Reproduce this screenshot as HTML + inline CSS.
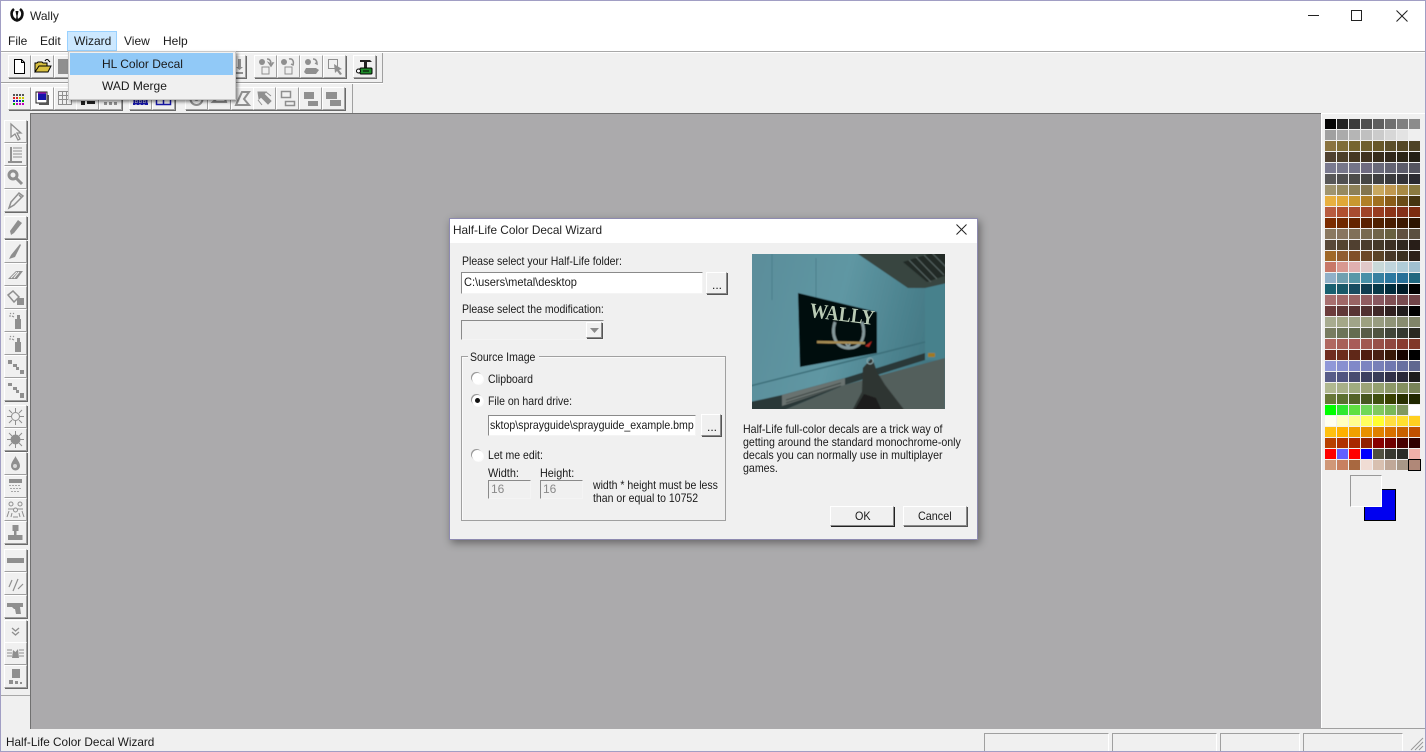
<!DOCTYPE html>
<html><head><meta charset="utf-8"><title>Wally</title>
<style>
html,body{margin:0;padding:0;width:1426px;height:752px;overflow:hidden;background:#f0f0f0}
body{position:relative;font:12px/14px "Liberation Sans",sans-serif;color:#1a1a1a}
div,span,svg{position:absolute;box-sizing:border-box}
.t{white-space:nowrap}
.n{transform:scaleX(.875);transform-origin:0 50%}
.b{width:23px;height:23px;background:#f0f0f0;border-top:1px solid #fff;border-left:1px solid #fff;border-right:1px solid #a0a0a0;border-bottom:1px solid #a0a0a0;box-shadow:1px 1px 0 #6a6a6a}
.b svg{left:0;top:0;width:21px;height:21px}
.in{background:#fff;border-top:1px solid #8a8a8a;border-left:1px solid #8a8a8a;border-right:1px solid #f4f4f4;border-bottom:1px solid #f4f4f4;overflow:hidden}
.dis{background:#f0f0f0;color:#8a8a8a}
.pb{background:#f0f0f0;border-top:1px solid #fff;border-left:1px solid #fff;border-right:1px solid #8a8a8a;border-bottom:1px solid #8a8a8a;box-shadow:1px 1px 0 #555}
.r{width:11px;height:11px;border-radius:50%;background:#fff;box-shadow:-1px -1px 0 #999,1px 1px 0 #fafafa}
.st{top:733px;height:19px;border-top:1px solid #a0a0a0;border-left:1px solid #a0a0a0;border-right:1px solid #fff}
</style></head><body>

<div style="left:0;top:0;width:1426px;height:51px;background:#fff"></div>
<div style="left:0;top:51px;width:1426px;height:1px;background:#a8a8a8"></div>
<div style="left:0;top:52px;width:1426px;height:1px;background:#fff"></div>

<svg style="left:9px;top:7px;width:16px;height:16px" viewBox="0 0 16 16"><path d="M5 2C1 5 2 12 8 13.500C14 12 15 5 11 2" fill="none" stroke="#111" stroke-width="2.600"/><path d="M6.500 4L9.500 4 8.600 9 9 13H7L7.400 9z" fill="#111"/></svg>
<div class="t" style="left:30px;top:9px;color:#222">Wally</div>

<svg style="left:1300px;top:0;width:126px;height:30px" viewBox="0 0 126 30">
<path d="M8 15.500h11" stroke="#222" fill="none"/>
<rect x="51.500" y="10.500" width="10" height="10" fill="none" stroke="#222"/>
<path d="M96.500 10.500l11 11M107.500 10.500l-11 11" stroke="#222" fill="none"/>
</svg>

<div class="t" style="left:8px;top:34px">File</div>
<div class="t" style="left:40px;top:34px">Edit</div>
<div style="left:67px;top:31px;width:50px;height:20px;background:#cce8ff;border:1px solid #99d1ff"></div>
<div class="t" style="left:74px;top:34px">Wizard</div>
<div class="t" style="left:124px;top:34px">View</div>
<div class="t" style="left:163px;top:34px">Help</div>

<!-- toolbar separators -->
<div style="left:0;top:82px;width:383px;height:1px;background:#a0a0a0"></div>
<div style="left:0;top:83px;width:383px;height:1px;background:#fff"></div>
<div style="left:382px;top:53px;width:1px;height:29px;background:#a0a0a0"></div>
<div style="left:352px;top:84px;width:1px;height:29px;background:#a0a0a0"></div>

<!-- Row 1 -->
<div class="b" style="left:8px;top:55px"><svg viewBox="0 0 21 21"><path d="M5.500 3.500h7l3 3v11h-10z M12.500 3.500v3h3" fill="#fff" stroke="#000"/></svg></div>
<div class="b" style="left:31px;top:55px"><svg viewBox="0 0 21 21"><path d="M3 16V7h2l1-1h4l1 1h4v3H7L3 16h13l3-6H7" fill="#d8c040" stroke="#000"/><path d="M13 5c1-2 3-2 4 0l1 1" stroke="#000" fill="none"/></svg></div>
<div class="b" style="left:54px;top:55px"><svg viewBox="0 0 21 21"><path d="M3 3h15v15H3z" fill="#8f8f8f"/></svg></div>
<div class="b" style="left:223px;top:55px"><svg viewBox="0 0 21 21"><path d="M14 3h3v8h2l-3.500 3-3.500-3h2zM7 16h12v2H7z" fill="#8f8f8f"/></svg></div>
<div class="b" style="left:254px;top:55px"><svg viewBox="0 0 21 21"><circle cx="7" cy="6" r="3" fill="#8f8f8f"/><path d="M7 11h7v7H7z" fill="#f0f0f0" stroke="#8f8f8f"/><path d="M12 3c3 0 4 2 4 5l-2-1 2 3 2-3-1 0" fill="none" stroke="#8f8f8f" stroke-width="1.500"/></svg></div>
<div class="b" style="left:277px;top:55px"><svg viewBox="0 0 21 21"><circle cx="6" cy="6" r="3" fill="#8f8f8f"/><path d="M7 11h7v7H7z" fill="#f0f0f0" stroke="#8f8f8f"/><path d="M11 3c4-1 5 3 4 6l-2-1" fill="none" stroke="#8f8f8f" stroke-width="1.500"/></svg></div>
<div class="b" style="left:300px;top:55px"><svg viewBox="0 0 21 21"><circle cx="7" cy="6" r="3" fill="#8f8f8f"/><path d="M3 16l2-4h10l3 2-3 4H5z" fill="#8f8f8f"/><path d="M12 3c3 0 4 2 4 5l-2-1" fill="none" stroke="#8f8f8f" stroke-width="1.500"/></svg></div>
<div class="b" style="left:323px;top:55px"><svg viewBox="0 0 21 21"><path d="M4.500 3.500h9v9h-9z" fill="none" stroke="#8f8f8f"/><path d="M10 8l8 5-3 1 3 4-2 1-3-4-2 2z" fill="#8f8f8f"/></svg></div>
<div class="b" style="left:353px;top:55px"><svg viewBox="0 0 21 21"><path d="M6 4h10l2 2h-5v6h-3V6H6z" fill="#222"/><rect x="6" y="12" width="12" height="6" rx="1" fill="#1f8a2a" stroke="#000"/><circle cx="4.500" cy="15" r="2" fill="#fff" stroke="#000"/><path d="M9 15h6" stroke="#000"/></svg></div>

<!-- Row 2 -->
<div class="b" style="left:8px;top:87px"><svg viewBox="0 0 21 21"><g fill="#555"><path d="M4 6h2v2H4zM7 6h2v2H7zM10 6h2v2h-2zM13 6h2v2h-2z"/></g><g fill="#d22"><path d="M4 9h2v2H4zM7 9h2v2H7z"/></g><g fill="#cc0"><path d="M10 9h2v2h-2zM13 9h2v2h-2z"/></g><g fill="#1a1ac8"><path d="M4 12h2v2H4zM7 12h2v2H7zM10 12h2v2h-2z"/></g><g fill="#0a0"><path d="M13 12h2v2h-2zM4 15h2v2H4z"/></g><g fill="#b0b"><path d="M7 15h2v2H7zM10 15h2v2h-2zM13 15h2v2h-2z"/></g></svg></div>
<div class="b" style="left:31px;top:87px;background:#fafafa"><svg viewBox="0 0 21 21"><path d="M4 4h11v11H4z" fill="#fff" stroke="#222"/><path d="M6 5h8v7H6z" fill="#1515a8"/><path d="M6 5h8" stroke="#d018c0"/><path d="M7 15h10v2H7zM15 7h2v9h-2z" fill="#555"/></svg></div>
<div class="b" style="left:54px;top:87px"><svg viewBox="0 0 21 21"><path d="M3.500 3.500h13v13h-13zM3.500 7.500h13M3.500 11.500h13M7.500 3.500v13M11.500 3.500v13" stroke="#8f8f8f" fill="none"/></svg></div>
<div class="b" style="left:76px;top:87px"><svg viewBox="0 0 21 21"><path d="M4 13h4v4H4zM10 13h8v3H10z" fill="#222"/></svg></div>
<div class="b" style="left:99px;top:87px"><svg viewBox="0 0 21 21"><path d="M4 14h3v3H4zM9 14h3v3H9zM14 14h3v3h-3z" fill="#8f8f8f"/></svg></div>
<div class="b" style="left:129px;top:87px"><svg viewBox="0 0 21 21"><path d="M3 8h15v9H3z" fill="#1515a8"/><path d="M3 10h15M3 12h15M3 14h15M6 8v9M10 8v9M14 8v9" stroke="#ddd" stroke-dasharray="1 1"/></svg></div>
<div class="b" style="left:152px;top:87px"><svg viewBox="0 0 21 21"><path d="M3.500 6.500h14v10h-14zM10.500 6.500v10" stroke="#1515a8" stroke-width="1.500" fill="none"/></svg></div>
<div class="b" style="left:185px;top:87px"><svg viewBox="0 0 21 21"><circle cx="10.500" cy="11" r="6" fill="none" stroke="#8f8f8f" stroke-width="2"/><circle cx="10.500" cy="11" r="2" fill="#8f8f8f"/></svg></div>
<div class="b" style="left:208px;top:87px"><svg viewBox="0 0 21 21"><path d="M4 14L14 5l3 9z" fill="none" stroke="#8f8f8f" stroke-width="2"/></svg></div>
<div class="b" style="left:231px;top:87px"><svg viewBox="0 0 21 21"><path d="M4 17L10 4h7l-5 7 5 6z" fill="none" stroke="#8f8f8f" stroke-width="2"/></svg></div>
<div class="b" style="left:253px;top:87px"><svg viewBox="0 0 21 21"><path d="M4 4h8l-2 2 7 7-3 3-7-7-2 2zM4 12l4 5M12 4l5 4" fill="#8f8f8f" stroke="#8f8f8f"/></svg></div>
<div class="b" style="left:276px;top:87px"><svg viewBox="0 0 21 21"><path d="M4.500 3.500h9v6h-9zM8.500 13.500h9v4h-9z" fill="none" stroke="#8f8f8f" stroke-width="1.500"/></svg></div>
<div class="b" style="left:299px;top:87px"><svg viewBox="0 0 21 21"><path d="M4 4h10v7H4zM8 13h10v5H8z" fill="#8f8f8f"/></svg></div>
<div class="b" style="left:322px;top:87px"><svg viewBox="0 0 21 21"><path d="M3 4h11v7H3zM7 12h11v6H7z" fill="#8f8f8f"/></svg></div>

<!-- Left toolbar -->
<div style="left:0;top:695px;width:31px;height:1px;background:#a8a8a8"></div>
<div class="b" style="left:4px;top:120px"><svg viewBox="0 0 21 21"><path d="M6 3l10 9h-4l3 6-2 1-3-6-4 3z" fill="#f0f0f0" stroke="#8f8f8f" stroke-width="1.300"/></svg></div>
<div class="b" style="left:4px;top:143px"><svg viewBox="0 0 21 21"><path d="M6 3v14M3 18h14" stroke="#8f8f8f" stroke-width="2"/><path d="M8 4h9M8 7h9M8 10h9M8 13h9" stroke="#8f8f8f"/></svg></div>
<div class="b" style="left:4px;top:166px"><svg viewBox="0 0 21 21"><circle cx="8" cy="8" r="4" fill="none" stroke="#8f8f8f" stroke-width="3"/><path d="M11 11l6 6" stroke="#8f8f8f" stroke-width="3"/></svg></div>
<div class="b" style="left:4px;top:189px"><svg viewBox="0 0 21 21"><path d="M4 18l2-6 8-9 4 3-9 9zM14 5l3 3" fill="#f0f0f0" stroke="#8f8f8f" stroke-width="1.500"/></svg></div>
<div class="b" style="left:4px;top:216px"><svg viewBox="0 0 21 21"><path d="M6 18l-1-4 8-11 4 3-8 10z" fill="#8f8f8f"/></svg></div>
<div class="b" style="left:4px;top:240px"><svg viewBox="0 0 21 21"><path d="M4 18l2-4 9-11 1 1-6 12z" fill="#8f8f8f"/></svg></div>
<div class="b" style="left:4px;top:263px"><svg viewBox="0 0 21 21"><path d="M3 15l8-8h7l-6 8z" fill="#8f8f8f"/><path d="M6 14l6-6M9 14l5-6" stroke="#f0f0f0"/></svg></div>
<div class="b" style="left:4px;top:286px"><svg viewBox="0 0 21 21"><path d="M3 8l5-4 6 6-5 5z" fill="#f0f0f0" stroke="#8f8f8f" stroke-width="1.500"/><path d="M12 11h7v7h-7z" fill="#8f8f8f"/></svg></div>
<div class="b" style="left:4px;top:309px"><svg viewBox="0 0 21 21"><path d="M10 9h6v10h-6z" fill="#8f8f8f"/><path d="M12 5h3v4h-3z" fill="#8f8f8f"/><path d="M5 3l1 1M8 3l1 1M4 6l2 0M7 6l2 1" stroke="#8f8f8f"/></svg></div>
<div class="b" style="left:4px;top:332px"><svg viewBox="0 0 21 21"><path d="M10 9h6v10h-6z" fill="#8f8f8f"/><path d="M12 5h3v4h-3z" fill="#8f8f8f"/><path d="M5 3l1 1M8 3l1 1M4 6l2 0M7 6l2 1" stroke="#8f8f8f"/></svg></div>
<div class="b" style="left:4px;top:355px"><svg viewBox="0 0 21 21"><path d="M3 4h4v4H3zM8 8h4v3H8zM11 11h3v3h-3zM15 14h4v4h-4z" fill="#8f8f8f"/></svg></div>
<div class="b" style="left:4px;top:378px"><svg viewBox="0 0 21 21"><path d="M3 4h4v3H3zM8 8h4v3H8zM11 11h3v3h-3zM15 14h4v5h-4z" fill="#8f8f8f"/></svg></div>
<div class="b" style="left:4px;top:405px"><svg viewBox="0 0 21 21"><circle cx="10.500" cy="10.500" r="4" fill="none" stroke="#8f8f8f"/><path d="M10.500 2v4M10.500 15v4M2 10.500h4M15 10.500h4M4 4l3 3M14 14l3 3M17 4l-3 3M7 14l-3 3" stroke="#8f8f8f"/></svg></div>
<div class="b" style="left:4px;top:428px"><svg viewBox="0 0 21 21"><circle cx="10.500" cy="10.500" r="5" fill="#8f8f8f"/><path d="M10.500 2v4M10.500 15v4M2 10.500h4M15 10.500h4M4 4l3 3M14 14l3 3M17 4l-3 3M7 14l-3 3" stroke="#8f8f8f"/></svg></div>
<div class="b" style="left:4px;top:452px"><svg viewBox="0 0 21 21"><path d="M10.500 3c1 3 4.500 6 4.500 10a4.500 4.500 0 0 1-9 0c0-4 3.500-7 4.500-10z" fill="#8f8f8f"/><circle cx="10" cy="13" r="2" fill="#d8d8d8"/></svg></div>
<div class="b" style="left:4px;top:475px"><svg viewBox="0 0 21 21"><path d="M4 3h13v4H4z" fill="#8f8f8f"/><path d="M5 9v1M8 9v1M11 9v1M14 9v1M6 12v1M9 12v1M12 12v1M15 12v1M7 15v1M10 15v1M13 15v1" stroke="#8f8f8f" stroke-width="1.500"/></svg></div>
<div class="b" style="left:4px;top:498px"><svg viewBox="0 0 21 21"><g fill="none" stroke="#8f8f8f"><circle cx="6" cy="5" r="2"/><circle cx="15" cy="5" r="2"/><circle cx="10.500" cy="11" r="2"/><path d="M3 10h6M12 10h6M2 18l2-6M8 18h5M19 18l-2-6M6 18l1-4M14 14l1 4"/></g></svg></div>
<div class="b" style="left:4px;top:521px"><svg viewBox="0 0 21 21"><path d="M7.500 3h6v6h-2v4h6v5H3v-5h6V9H7.500z" fill="#8f8f8f"/></svg></div>
<div class="b" style="left:4px;top:549px"><svg viewBox="0 0 21 21"><path d="M2 8h17v5H2z" fill="#8f8f8f"/></svg></div>
<div class="b" style="left:4px;top:572px"><svg viewBox="0 0 21 21"><path d="M4 14l3-7M8 18l5-12M13 16l5-5" stroke="#8f8f8f" stroke-width="1.200"/></svg></div>
<div class="b" style="left:4px;top:595px"><svg viewBox="0 0 21 21"><path d="M2 7h16v4h-3l1 7h-5l-1-5H9L7 11H2z" fill="#8f8f8f"/></svg></div>
<div class="b" style="left:4px;top:620px"><svg viewBox="0 0 21 21"><path d="M7 7l3.500 3L14 7M7 11l3.500 3 3.500-3" stroke="#8f8f8f" fill="none" stroke-width="1.300"/></svg></div>
<div class="b" style="left:4px;top:642px"><svg viewBox="0 0 21 21"><path d="M2 7h5M2 10h5M2 13h5M14 7h5M14 10h5M14 13h5" stroke="#8f8f8f"/><path d="M7 15l1-8 2.500 2L13 6l1 9z" fill="#8f8f8f"/></svg></div>
<div class="b" style="left:4px;top:665px"><svg viewBox="0 0 21 21"><path d="M7 3h8v9H7zM4 14h4v4H4zM10 15h3v3h-3zM15 16h2v2h-2z" fill="#8f8f8f"/></svg></div>

<!-- workspace -->
<div style="left:30px;top:113px;width:1291px;height:616px;background:#abaaac;border-top:1px solid #707070;border-left:1px solid #707070"></div>
<div style="left:1321px;top:113px;width:105px;height:616px;background:#f0f0f0;border-top:1px solid #fff;border-left:1px solid #fff"></div>
<div style="left:1321px;top:728px;width:105px;height:1px;background:#a0a0a0"></div>

<!-- palette -->
<svg style="left:1325px;top:119px;width:96px;height:352px" viewBox="0 0 96 352" shape-rendering="crispEdges">
<rect x="0" y="0" width="11" height="10" fill="#050505"/><rect x="12" y="0" width="11" height="10" fill="#232323"/><rect x="24" y="0" width="11" height="10" fill="#3b3b3b"/><rect x="36" y="0" width="11" height="10" fill="#4f4f4f"/><rect x="48" y="0" width="11" height="10" fill="#5f5f5f"/><rect x="60" y="0" width="11" height="10" fill="#6f6f6f"/><rect x="72" y="0" width="11" height="10" fill="#7f7f7f"/><rect x="84" y="0" width="11" height="10" fill="#8b8b8b"/>
<rect x="0" y="11" width="11" height="10" fill="#a0a0a0"/><rect x="12" y="11" width="11" height="10" fill="#ababab"/><rect x="24" y="11" width="11" height="10" fill="#b5b5b5"/><rect x="36" y="11" width="11" height="10" fill="#c0c0c0"/><rect x="48" y="11" width="11" height="10" fill="#cbcbcb"/><rect x="60" y="11" width="11" height="10" fill="#d7d7d7"/><rect x="72" y="11" width="11" height="10" fill="#e3e3e3"/><rect x="84" y="11" width="11" height="10" fill="#efefef"/>
<rect x="0" y="22" width="11" height="10" fill="#8a7340"/><rect x="12" y="22" width="11" height="10" fill="#7f6d38"/><rect x="24" y="22" width="11" height="10" fill="#76652f"/><rect x="36" y="22" width="11" height="10" fill="#6f5f2f"/><rect x="48" y="22" width="11" height="10" fill="#685829"/><rect x="60" y="22" width="11" height="10" fill="#5c4f2a"/><rect x="72" y="22" width="11" height="10" fill="#554826"/><rect x="84" y="22" width="11" height="10" fill="#4e4326"/>
<rect x="0" y="33" width="11" height="10" fill="#4f4130"/><rect x="12" y="33" width="11" height="10" fill="#4c3f2a"/><rect x="24" y="33" width="11" height="10" fill="#463822"/><rect x="36" y="33" width="11" height="10" fill="#403220"/><rect x="48" y="33" width="11" height="10" fill="#372c1c"/><rect x="60" y="33" width="11" height="10" fill="#30271a"/><rect x="72" y="33" width="11" height="10" fill="#2a2416"/><rect x="84" y="33" width="11" height="10" fill="#231f15"/>
<rect x="0" y="44" width="11" height="10" fill="#7a7a90"/><rect x="12" y="44" width="11" height="10" fill="#77778a"/><rect x="24" y="44" width="11" height="10" fill="#747488"/><rect x="36" y="44" width="11" height="10" fill="#6f6b80"/><rect x="48" y="44" width="11" height="10" fill="#6a6a7a"/><rect x="60" y="44" width="11" height="10" fill="#636372"/><rect x="72" y="44" width="11" height="10" fill="#5c5c6a"/><rect x="84" y="44" width="11" height="10" fill="#555560"/>
<rect x="0" y="55" width="11" height="10" fill="#585858"/><rect x="12" y="55" width="11" height="10" fill="#505050"/><rect x="24" y="55" width="11" height="10" fill="#4c4c4a"/><rect x="36" y="55" width="11" height="10" fill="#464644"/><rect x="48" y="55" width="11" height="10" fill="#404040"/><rect x="60" y="55" width="11" height="10" fill="#3a3a3c"/><rect x="72" y="55" width="11" height="10" fill="#333338"/><rect x="84" y="55" width="11" height="10" fill="#2a2a30"/>
<rect x="0" y="66" width="11" height="10" fill="#a09570"/><rect x="12" y="66" width="11" height="10" fill="#968a60"/><rect x="24" y="66" width="11" height="10" fill="#8c8058"/><rect x="36" y="66" width="11" height="10" fill="#837550"/><rect x="48" y="66" width="11" height="10" fill="#c8a860"/><rect x="60" y="66" width="11" height="10" fill="#c09850"/><rect x="72" y="66" width="11" height="10" fill="#a88a45"/><rect x="84" y="66" width="11" height="10" fill="#8a7a40"/>
<rect x="0" y="77" width="11" height="10" fill="#e8b040"/><rect x="12" y="77" width="11" height="10" fill="#e0a838"/><rect x="24" y="77" width="11" height="10" fill="#c89830"/><rect x="36" y="77" width="11" height="10" fill="#b08028"/><rect x="48" y="77" width="11" height="10" fill="#a07020"/><rect x="60" y="77" width="11" height="10" fill="#8a5c18"/><rect x="72" y="77" width="11" height="10" fill="#6a4c18"/><rect x="84" y="77" width="11" height="10" fill="#453510"/>
<rect x="0" y="88" width="11" height="10" fill="#b85c40"/><rect x="12" y="88" width="11" height="10" fill="#b05030"/><rect x="24" y="88" width="11" height="10" fill="#a84c30"/><rect x="36" y="88" width="11" height="10" fill="#a04428"/><rect x="48" y="88" width="11" height="10" fill="#983c20"/><rect x="60" y="88" width="11" height="10" fill="#8c3418"/><rect x="72" y="88" width="11" height="10" fill="#84301a"/><rect x="84" y="88" width="11" height="10" fill="#7c2c10"/>
<rect x="0" y="99" width="11" height="10" fill="#7c2c00"/><rect x="12" y="99" width="11" height="10" fill="#702800"/><rect x="24" y="99" width="11" height="10" fill="#642400"/><rect x="36" y="99" width="11" height="10" fill="#5a2000"/><rect x="48" y="99" width="11" height="10" fill="#502000"/><rect x="60" y="99" width="11" height="10" fill="#481c00"/><rect x="72" y="99" width="11" height="10" fill="#3c1800"/><rect x="84" y="99" width="11" height="10" fill="#2c1400"/>
<rect x="0" y="110" width="11" height="10" fill="#8a7860"/><rect x="12" y="110" width="11" height="10" fill="#887560"/><rect x="24" y="110" width="11" height="10" fill="#807058"/><rect x="36" y="110" width="11" height="10" fill="#786a50"/><rect x="48" y="110" width="11" height="10" fill="#706448"/><rect x="60" y="110" width="11" height="10" fill="#686040"/><rect x="72" y="110" width="11" height="10" fill="#605040"/><rect x="84" y="110" width="11" height="10" fill="#5a5040"/>
<rect x="0" y="121" width="11" height="10" fill="#584838"/><rect x="12" y="121" width="11" height="10" fill="#544430"/><rect x="24" y="121" width="11" height="10" fill="#504030"/><rect x="36" y="121" width="11" height="10" fill="#4a3c2c"/><rect x="48" y="121" width="11" height="10" fill="#443828"/><rect x="60" y="121" width="11" height="10" fill="#3c3024"/><rect x="72" y="121" width="11" height="10" fill="#302820"/><rect x="84" y="121" width="11" height="10" fill="#281e18"/>
<rect x="0" y="132" width="11" height="10" fill="#a06828"/><rect x="12" y="132" width="11" height="10" fill="#905c30"/><rect x="24" y="132" width="11" height="10" fill="#805028"/><rect x="36" y="132" width="11" height="10" fill="#6c4828"/><rect x="48" y="132" width="11" height="10" fill="#5c4428"/><rect x="60" y="132" width="11" height="10" fill="#483828"/><rect x="72" y="132" width="11" height="10" fill="#3c3020"/><rect x="84" y="132" width="11" height="10" fill="#2c2018"/>
<rect x="0" y="143" width="11" height="10" fill="#c87868"/><rect x="12" y="143" width="11" height="10" fill="#d89890"/><rect x="24" y="143" width="11" height="10" fill="#e0b0b0"/><rect x="36" y="143" width="11" height="10" fill="#e0c8c8"/><rect x="48" y="143" width="11" height="10" fill="#c8d8d8"/><rect x="60" y="143" width="11" height="10" fill="#c0d4dc"/><rect x="72" y="143" width="11" height="10" fill="#b0ccd8"/><rect x="84" y="143" width="11" height="10" fill="#a0c0d0"/>
<rect x="0" y="154" width="11" height="10" fill="#90b0c8"/><rect x="12" y="154" width="11" height="10" fill="#70a0b0"/><rect x="24" y="154" width="11" height="10" fill="#5898a8"/><rect x="36" y="154" width="11" height="10" fill="#4890a8"/><rect x="48" y="154" width="11" height="10" fill="#3880a0"/><rect x="60" y="154" width="11" height="10" fill="#2c78a0"/><rect x="72" y="154" width="11" height="10" fill="#287098"/><rect x="84" y="154" width="11" height="10" fill="#206880"/>
<rect x="0" y="165" width="11" height="10" fill="#186070"/><rect x="12" y="165" width="11" height="10" fill="#185868"/><rect x="24" y="165" width="11" height="10" fill="#184c60"/><rect x="36" y="165" width="11" height="10" fill="#103c50"/><rect x="48" y="165" width="11" height="10" fill="#083848"/><rect x="60" y="165" width="11" height="10" fill="#002c3c"/><rect x="72" y="165" width="11" height="10" fill="#001c28"/><rect x="84" y="165" width="11" height="10" fill="#000000"/>
<rect x="0" y="176" width="11" height="10" fill="#a87070"/><rect x="12" y="176" width="11" height="10" fill="#a06868"/><rect x="24" y="176" width="11" height="10" fill="#986464"/><rect x="36" y="176" width="11" height="10" fill="#905c60"/><rect x="48" y="176" width="11" height="10" fill="#885860"/><rect x="60" y="176" width="11" height="10" fill="#805054"/><rect x="72" y="176" width="11" height="10" fill="#784c50"/><rect x="84" y="176" width="11" height="10" fill="#704448"/>
<rect x="0" y="187" width="11" height="10" fill="#6c3c3c"/><rect x="12" y="187" width="11" height="10" fill="#603838"/><rect x="24" y="187" width="11" height="10" fill="#583434"/><rect x="36" y="187" width="11" height="10" fill="#503030"/><rect x="48" y="187" width="11" height="10" fill="#402828"/><rect x="60" y="187" width="11" height="10" fill="#302020"/><rect x="72" y="187" width="11" height="10" fill="#201c1c"/><rect x="84" y="187" width="11" height="10" fill="#000000"/>
<rect x="0" y="198" width="11" height="10" fill="#a8ac90"/><rect x="12" y="198" width="11" height="10" fill="#a4a888"/><rect x="24" y="198" width="11" height="10" fill="#a0a488"/><rect x="36" y="198" width="11" height="10" fill="#9ca080"/><rect x="48" y="198" width="11" height="10" fill="#989c80"/><rect x="60" y="198" width="11" height="10" fill="#909478"/><rect x="72" y="198" width="11" height="10" fill="#888c70"/><rect x="84" y="198" width="11" height="10" fill="#808468"/>
<rect x="0" y="209" width="11" height="10" fill="#787c60"/><rect x="12" y="209" width="11" height="10" fill="#6c7458"/><rect x="24" y="209" width="11" height="10" fill="#646c50"/><rect x="36" y="209" width="11" height="10" fill="#585c48"/><rect x="48" y="209" width="11" height="10" fill="#505440"/><rect x="60" y="209" width="11" height="10" fill="#404438"/><rect x="72" y="209" width="11" height="10" fill="#343830"/><rect x="84" y="209" width="11" height="10" fill="#282820"/>
<rect x="0" y="220" width="11" height="10" fill="#b06860"/><rect x="12" y="220" width="11" height="10" fill="#a86058"/><rect x="24" y="220" width="11" height="10" fill="#a85c58"/><rect x="36" y="220" width="11" height="10" fill="#a05850"/><rect x="48" y="220" width="11" height="10" fill="#985048"/><rect x="60" y="220" width="11" height="10" fill="#904840"/><rect x="72" y="220" width="11" height="10" fill="#883c30"/><rect x="84" y="220" width="11" height="10" fill="#803828"/>
<rect x="0" y="231" width="11" height="10" fill="#702c20"/><rect x="12" y="231" width="11" height="10" fill="#6c2c1c"/><rect x="24" y="231" width="11" height="10" fill="#602818"/><rect x="36" y="231" width="11" height="10" fill="#501c10"/><rect x="48" y="231" width="11" height="10" fill="#482014"/><rect x="60" y="231" width="11" height="10" fill="#381808"/><rect x="72" y="231" width="11" height="10" fill="#180400"/><rect x="84" y="231" width="11" height="10" fill="#000000"/>
<rect x="0" y="242" width="11" height="10" fill="#9098d8"/><rect x="12" y="242" width="11" height="10" fill="#8890d0"/><rect x="24" y="242" width="11" height="10" fill="#8088c8"/><rect x="36" y="242" width="11" height="10" fill="#7c84c0"/><rect x="48" y="242" width="11" height="10" fill="#7880b8"/><rect x="60" y="242" width="11" height="10" fill="#7078b0"/><rect x="72" y="242" width="11" height="10" fill="#6870a0"/><rect x="84" y="242" width="11" height="10" fill="#606890"/>
<rect x="0" y="253" width="11" height="10" fill="#585c88"/><rect x="12" y="253" width="11" height="10" fill="#505480"/><rect x="24" y="253" width="11" height="10" fill="#484c70"/><rect x="36" y="253" width="11" height="10" fill="#3c4060"/><rect x="48" y="253" width="11" height="10" fill="#383c58"/><rect x="60" y="253" width="11" height="10" fill="#303048"/><rect x="72" y="253" width="11" height="10" fill="#282838"/><rect x="84" y="253" width="11" height="10" fill="#1c1c1c"/>
<rect x="0" y="264" width="11" height="10" fill="#b0b890"/><rect x="12" y="264" width="11" height="10" fill="#a8b088"/><rect x="24" y="264" width="11" height="10" fill="#a0ac80"/><rect x="36" y="264" width="11" height="10" fill="#9ca478"/><rect x="48" y="264" width="11" height="10" fill="#94a070"/><rect x="60" y="264" width="11" height="10" fill="#8c9868"/><rect x="72" y="264" width="11" height="10" fill="#849060"/><rect x="84" y="264" width="11" height="10" fill="#788458"/>
<rect x="0" y="275" width="11" height="10" fill="#687838"/><rect x="12" y="275" width="11" height="10" fill="#5c7030"/><rect x="24" y="275" width="11" height="10" fill="#546428"/><rect x="36" y="275" width="11" height="10" fill="#485820"/><rect x="48" y="275" width="11" height="10" fill="#405010"/><rect x="60" y="275" width="11" height="10" fill="#384000"/><rect x="72" y="275" width="11" height="10" fill="#283000"/><rect x="84" y="275" width="11" height="10" fill="#202800"/>
<rect x="0" y="286" width="11" height="10" fill="#00ff00"/><rect x="12" y="286" width="11" height="10" fill="#30e830"/><rect x="24" y="286" width="11" height="10" fill="#60e040"/><rect x="36" y="286" width="11" height="10" fill="#70d858"/><rect x="48" y="286" width="11" height="10" fill="#80c860"/><rect x="60" y="286" width="11" height="10" fill="#78b858"/><rect x="72" y="286" width="11" height="10" fill="#809860"/><rect x="84" y="286" width="11" height="10" fill="#ffffff"/>
<rect x="0" y="297" width="11" height="10" fill="#fffff0"/><rect x="12" y="297" width="11" height="10" fill="#ffffc0"/><rect x="24" y="297" width="11" height="10" fill="#ffff90"/><rect x="36" y="297" width="11" height="10" fill="#ffff60"/><rect x="48" y="297" width="11" height="10" fill="#ffff30"/><rect x="60" y="297" width="11" height="10" fill="#ffe040"/><rect x="72" y="297" width="11" height="10" fill="#ffe030"/><rect x="84" y="297" width="11" height="10" fill="#ffd020"/>
<rect x="0" y="308" width="11" height="10" fill="#ffc010"/><rect x="12" y="308" width="11" height="10" fill="#ffb000"/><rect x="24" y="308" width="11" height="10" fill="#f0a000"/><rect x="36" y="308" width="11" height="10" fill="#e89000"/><rect x="48" y="308" width="11" height="10" fill="#e08000"/><rect x="60" y="308" width="11" height="10" fill="#d87000"/><rect x="72" y="308" width="11" height="10" fill="#c86000"/><rect x="84" y="308" width="11" height="10" fill="#c05000"/>
<rect x="0" y="319" width="11" height="10" fill="#b84000"/><rect x="12" y="319" width="11" height="10" fill="#b03000"/><rect x="24" y="319" width="11" height="10" fill="#a82800"/><rect x="36" y="319" width="11" height="10" fill="#902000"/><rect x="48" y="319" width="11" height="10" fill="#880000"/><rect x="60" y="319" width="11" height="10" fill="#700000"/><rect x="72" y="319" width="11" height="10" fill="#480000"/><rect x="84" y="319" width="11" height="10" fill="#300000"/>
<rect x="0" y="330" width="11" height="10" fill="#ff0000"/><rect x="12" y="330" width="11" height="10" fill="#6060ff"/><rect x="24" y="330" width="11" height="10" fill="#ff0000"/><rect x="36" y="330" width="11" height="10" fill="#0000ff"/><rect x="48" y="330" width="11" height="10" fill="#505040"/><rect x="60" y="330" width="11" height="10" fill="#383830"/><rect x="72" y="330" width="11" height="10" fill="#2c2c28"/><rect x="84" y="330" width="11" height="10" fill="#f0b0a8"/>
<rect x="0" y="341" width="11" height="10" fill="#d09878"/><rect x="12" y="341" width="11" height="10" fill="#c88060"/><rect x="24" y="341" width="11" height="10" fill="#a86840"/><rect x="36" y="341" width="11" height="10" fill="#f0dcd4"/><rect x="48" y="341" width="11" height="10" fill="#d8c0b0"/><rect x="60" y="341" width="11" height="10" fill="#c0a898"/><rect x="72" y="341" width="11" height="10" fill="#a89888"/><rect x="83.500" y="340.500" width="12" height="11" fill="#b08878" stroke="#000"/>
</svg>

<!-- fg/bg swatches -->
<div style="left:1364px;top:489px;width:32px;height:32px;background:#0000f0;border:1px solid #000"></div>
<div style="left:1350px;top:475px;width:32px;height:32px;background:#f0f0f0;border-top:1px solid #999;border-left:1px solid #999;border-right:1px solid #fff;border-bottom:1px solid #fff"></div>

<!-- dropdown menu -->
<div style="left:68px;top:51px;width:168px;height:49px;background:#f0f0f0;border:1px solid #c8c8c8;box-shadow:2px 2px 3px rgba(0,0,0,.45)"></div>
<div style="left:70px;top:53px;width:163px;height:22px;background:#91c9f7"></div>
<div class="t" style="left:102px;top:57px">HL Color Decal</div>
<div class="t" style="left:102px;top:79px">WAD Merge</div>

<!-- dialog -->
<div style="left:449px;top:218px;width:529px;height:322px;background:#f0f0f0;border:1px solid #8d8ab0;box-shadow:2px 3px 8px rgba(0,0,0,.4)"></div>
<div style="left:450px;top:219px;width:527px;height:24px;background:#fff"></div>
<div class="t" style="left:453px;top:223px;color:#222;transform:scaleX(.985);transform-origin:0 50%">Half-Life Color Decal Wizard</div>
<svg style="left:955px;top:223px;width:14px;height:14px" viewBox="0 0 14 14"><path d="M1.500 1.500l10 10M11.500 1.500l-10 10" stroke="#222" fill="none"/></svg>

<div class="t n" style="left:462px;top:254px">Please select your Half-Life folder:</div>
<div class="in" style="left:461px;top:272px;width:242px;height:22px"></div>
<div class="t" style="left:464px;top:275px;transform:scaleX(.92);transform-origin:0 50%">C:\users\metal\desktop</div>
<div class="pb" style="left:706px;top:272px;width:21px;height:22px"></div>
<div class="t" style="left:712px;top:278px">...</div>
<div class="t n" style="left:462px;top:302px">Please select the modification:</div>
<div class="in" style="left:461px;top:320px;width:143px;height:20px;background:#f0f0f0"></div>
<div class="pb" style="left:586px;top:322px;width:16px;height:16px"><svg style="left:3px;top:5px;width:9px;height:5px" viewBox="0 0 9 5"><path d="M0 0h9L4.500 5z" fill="#8a8a8a"/></svg></div>

<div style="left:461px;top:356px;width:265px;height:165px;border:1px solid #a0a0a0;box-shadow:inset 1px 1px 0 #fafafa"></div>
<div style="left:468px;top:350px;width:71px;height:14px;background:#f0f0f0"></div>
<div class="t n" style="left:470px;top:350px">Source Image</div>
<div class="r" style="left:472px;top:373px"></div>
<div class="t n" style="left:488px;top:372px">Clipboard</div>
<div class="r" style="left:472px;top:395px"></div>
<div style="left:475px;top:398px;width:5px;height:5px;border-radius:50%;background:#111"></div>
<div class="t n" style="left:488px;top:394px">File on hard drive:</div>
<div class="in" style="left:488px;top:415px;width:208px;height:21px"><span class="t" style="left:1px;top:2px;transform:scaleX(.88);transform-origin:0 50%">sktop\sprayguide\sprayguide_example.bmp</span></div>
<div class="pb" style="left:701px;top:414px;width:20px;height:22px"></div>
<div class="t" style="left:707px;top:420px">...</div>
<div class="r" style="left:472px;top:450px"></div>
<div class="t n" style="left:488px;top:448px">Let me edit:</div>
<div class="t" style="left:488px;top:466px;transform:scaleX(.91);transform-origin:0 50%">Width:</div>
<div class="t" style="left:540px;top:466px;transform:scaleX(.9);transform-origin:0 50%">Height:</div>
<div class="in dis t" style="left:488px;top:480px;width:43px;height:19px;line-height:17px;padding-left:2px">16</div>
<div class="in dis t" style="left:540px;top:480px;width:43px;height:19px;line-height:17px;padding-left:2px">16</div>
<div class="t n" style="left:593px;top:479px;line-height:13px">width * height must be less<br>than or equal to 10752</div>

<!-- preview image -->
<svg style="left:752px;top:254px;width:193px;height:155px" viewBox="0 0 193 155" preserveAspectRatio="none">
<defs><linearGradient id="w" x1="0" y1="0" x2="1" y2="0.200"><stop offset="0" stop-color="#5b8d9a"/><stop offset=".5" stop-color="#5f97a3"/><stop offset="1" stop-color="#427783"/></linearGradient>
<filter id="bl"><feGaussianBlur stdDeviation=".6"/></filter></defs>
<g filter="url(#bl)">
<rect x="-2" y="-2" width="197" height="159" fill="url(#w)"/>
<path d="M173 34L193 29V106H173z" fill="#47818c"/>
<path d="M103 -2H195V29L173 34 156 34z" fill="#38443f"/>
<path d="M151 8L183 -2H195V21L175 28z" fill="#232a28"/>
<path d="M157 6l22 22M164 3l21 22M172 1l20 20M180 -1l14 14" stroke="#55625f" stroke-width="1.200" fill="none"/>
<path d="M64 4V50M20 0V46" stroke="#4a7f8b" fill="none"/>
<path d="M-2 132L173 88" stroke="#3c6f7a" stroke-width="1.500" fill="none"/>
<path d="M-2 148L30 141 93 124 173 99V106L93 131 30 157H-2z" fill="#2c3837"/>
<path d="M30 141L93 124V131L30 152z" fill="#697270"/>
<path d="M34 146l55-17M34 149l55-17" stroke="#3d4645" fill="none"/>
<path d="M30 157L93 131 193 104V157z" fill="#535e5c"/>
<path d="M46 39L125 58 125 99 48 113z" fill="#05070c"/>
<path d="M176 99h7v4h-7z" fill="#a07a20"/>
<path d="M83 68c-4 12 0 26 14 26s17-14 13-26" fill="none" stroke="#84989a" stroke-width="3"/>
<path d="M93 88l3 5 3-5" fill="none" stroke="#84989a" stroke-width="2"/>
<path d="M65 88L113 89" stroke="#a58b52" stroke-width="2.500" fill="none"/>
<path d="M113 92l7-5-3 6z" fill="#b02a20"/>
</g>
<text x="57" y="63" transform="rotate(7 57 63)" font-family="Liberation Serif,serif" font-weight="700" font-size="21" fill="#b9cab4" textLength="65" lengthAdjust="spacingAndGlyphs">WALLY</text>
<g filter="url(#bl)">
<path d="M100 157L110 138 111 114 120 104 125 118 133 131 153 157z" fill="#2e3533"/>
<path d="M102 157L112 140 124 144 130 157z" fill="#1c1f1e"/>
<circle cx="118" cy="107" r="3" fill="none" stroke="#8fa8ac" stroke-width="1"/>
</g>
</svg>

<div class="t" style="left:743px;top:423px;line-height:13px;transform:scaleX(.885);transform-origin:0 50%">Half-Life full-color decals are a trick way of<br>getting around the standard monochrome-only<br>decals you can normally use in multiplayer<br>games.</div>

<div class="pb" style="left:830px;top:506px;width:64px;height:20px;box-shadow:1px 1px 0 #222"></div>
<div class="t" style="left:855px;top:509px;transform:scaleX(.9);transform-origin:0 50%">OK</div>
<div class="pb" style="left:903px;top:506px;width:64px;height:20px"></div>
<div class="t" style="left:918px;top:509px;transform:scaleX(.9);transform-origin:0 50%">Cancel</div>

<!-- status bar -->
<div class="t" style="left:6px;top:735px;transform:scaleX(.98);transform-origin:0 50%">Half-Life Color Decal Wizard</div>
<div class="st" style="left:984px;width:125px"></div>
<div class="st" style="left:1112px;width:105px"></div>
<div class="st" style="left:1220px;width:80px"></div>
<div class="st" style="left:1303px;width:100px"></div>
<svg style="left:1410px;top:737px;width:14px;height:14px" viewBox="0 0 14 14"><path d="M1 13L13 1M5 13l8-8M9 13l4-4" stroke="#999" fill="none"/></svg>

<!-- window border -->
<div style="left:0;top:0;width:1426px;height:752px;border:1px solid #a19ec4;pointer-events:none"></div>
</body></html>
